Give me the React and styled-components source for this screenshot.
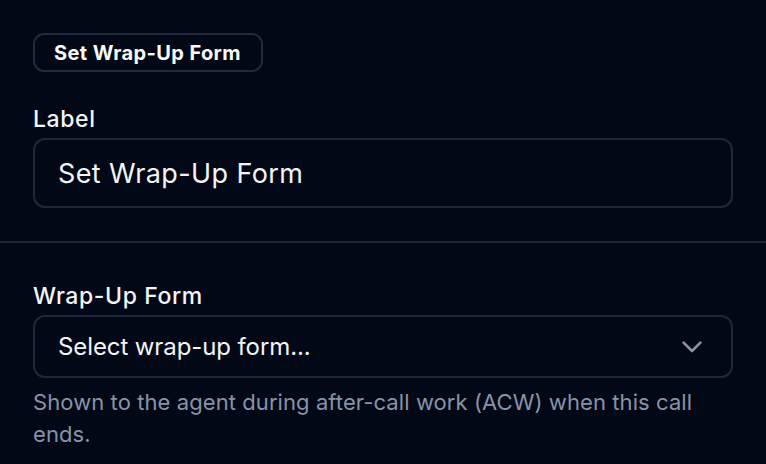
import React from "react";
import styled, { createGlobalStyle } from "styled-components";

const GlobalStyle = createGlobalStyle`
  html, body {
    margin: 0;
    padding: 0;
    background: #030817;
  }
  body {
    font-family: Inter, "Noto Sans", "Liberation Sans", sans-serif;
    color: #f1f5f9;
    -webkit-font-smoothing: antialiased;
  }
`;

const Page = styled.div`
  display: flex;
  flex-direction: column;
  width: 766px;
  min-height: 464px;
  background: #030817;
`;

const Section = styled.section`
  display: flex;
  flex-direction: column;
  padding: ${(p) => p.$pad};
  border-bottom: ${(p) => (p.$divided ? "2px solid #1c2434" : "none")};
`;

const Badge = styled.div`
  display: inline-flex;
  align-items: center;
  align-self: flex-start;
  height: 39px;
  box-sizing: border-box;
  padding: 0 20px 0 19px;
  border: 2px solid #222b3b;
  border-radius: 11px;
  font-size: 20px;
  font-weight: 700;
  letter-spacing: 0.4px;
  color: #f8fafc;
`;

const Field = styled.div`
  display: flex;
  flex-direction: column;
  gap: 4px;
  margin-top: ${(p) => p.$top || 0}px;
`;

const Label = styled.label`
  font-size: 23px;
  line-height: 30px;
  font-weight: 500;
  letter-spacing: 0.6px;
  color: #f1f5f9;
`;

const Input = styled.div`
  display: flex;
  align-items: center;
  justify-content: space-between;
  height: ${(p) => p.$h}px;
  box-sizing: border-box;
  padding: 0 29px 0 23px;
  border: 2px solid #1f2838;
  border-radius: 12px;
  font-size: ${(p) => p.$size}px;
  letter-spacing: ${(p) => p.$track || 0}px;
  color: #f1f5f9;
`;

const Help = styled.p`
  margin: 8px 0 0;
  font-size: 22px;
  line-height: 32px;
  letter-spacing: 0.08px;
  color: #8893a7;
`;

const Chevron = () => (
  <svg width="20" height="12" viewBox="0 0 20 12" fill="none">
    <path
      d="M1.6 1.6 L10 10 L18.4 1.6"
      stroke="#8993a6"
      strokeWidth="2.6"
      strokeLinecap="round"
      strokeLinejoin="round"
    />
  </svg>
);

export default function App() {
  return (
    <>
      <GlobalStyle />
      <Page>
        <Section $pad="33px 33px 33px" $divided>
          <Badge>Set Wrap-Up Form</Badge>
          <Field $top={32}>
            <Label>Label</Label>
            <Input $h={70} $size={27} $track={0.4}>Set Wrap-Up Form</Input>
          </Field>
        </Section>
        <Section $pad="38px 33px 0">
          <Field>
            <Label>Wrap-Up Form</Label>
            <Input $h={63} $size={24} $track={-0.1}>
              <span>Select wrap-up form...</span>
              <Chevron />
            </Input>
          </Field>
          <Help>Shown to the agent during after-call work (ACW) when this call ends.</Help>
        </Section>
      </Page>
    </>
  );
}
